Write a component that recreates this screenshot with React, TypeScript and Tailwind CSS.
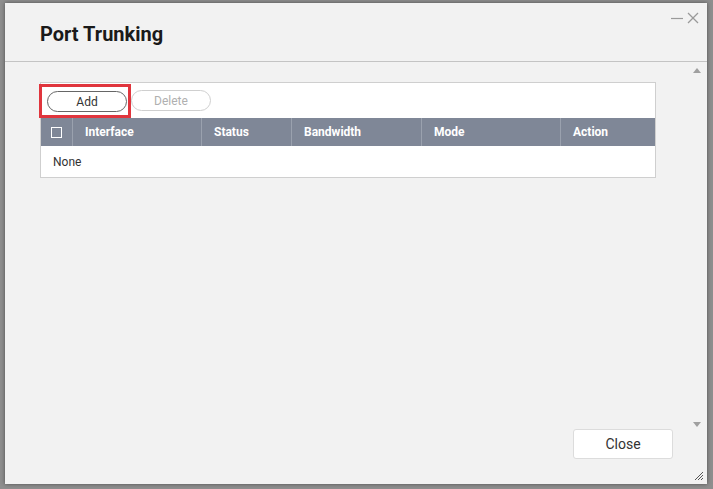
import React from "react";

const font = { fontFamily: "Roboto, 'Noto Sans', Arial, sans-serif" };

export default function App() {
  const cols = [
    { label: "Interface", w: "w-[129px]" },
    { label: "Status", w: "w-[90px]" },
    { label: "Bandwidth", w: "w-[130px]" },
    { label: "Mode", w: "w-[139px]" },
    { label: "Action", w: "flex-1" },
  ];
  return (
    <div
      className="w-[713px] h-[489px] bg-[#8e8e8e] pl-[5px] pt-[3px] pr-[6px] pb-[5px] overflow-hidden"
      style={font}
    >
      <div className="relative w-full h-full bg-[#f2f2f2] flex flex-col shadow-[0_0_4px_rgba(0,0,0,0.45)]">
        {/* header */}
        <div className="relative h-[59px] shrink-0 border-b border-[#c4c4c4] flex items-center pl-[35px] pt-[3px]">
          <span className="text-[20px] font-bold text-[#1a1a1a] leading-none">Port Trunking</span>
          <div className="absolute top-[9px] right-[8px] flex items-center gap-[4px]">
            <svg width="12" height="12" viewBox="0 0 12 12">
              <line x1="0" y1="6.5" x2="12" y2="6.5" stroke="#9a9a9a" strokeWidth="1.2" />
            </svg>
            <svg width="12" height="12" viewBox="0 0 12 12">
              <line x1="1" y1="1" x2="11" y2="11" stroke="#9a9a9a" strokeWidth="1.2" />
              <line x1="11" y1="1" x2="1" y2="11" stroke="#9a9a9a" strokeWidth="1.2" />
            </svg>
          </div>
        </div>

        {/* body */}
        <div className="flex-1 flex min-h-0">
          <div className="flex-1 pl-[35px] pt-[20px]">
            <div className="w-[616px] bg-white border border-[#cfcfcf]">
              <div className="h-[35px] flex items-center pl-[6px] gap-[4px]">
                <div className="relative">
                  <div className="absolute -left-[8px] -top-[5px] w-[92px] h-[34px] border-[3px] border-[#e0353d] pointer-events-none" />
                  <button className="w-[80px] h-[21px] rounded-full border border-[#666] bg-white text-[12px] text-[#333] leading-none">
                    Add
                  </button>
                </div>
                <button className="w-[80px] h-[21px] rounded-full border border-[#cfcfcf] bg-white text-[12px] text-[#b0b0b0] leading-none">
                  Delete
                </button>
              </div>
              <div className="h-[28px] bg-[#7f8797] flex text-white text-[12px] font-bold">
                <div className="w-[32px] border-r border-[#9aa1ae] flex items-center justify-center">
                  <div className="w-[11px] h-[11px] border border-white" />
                </div>
                {cols.map((c, i) => (
                  <div
                    key={c.label}
                    className={`${c.w} ${i < cols.length - 1 ? "border-r border-[#9aa1ae]" : ""} flex items-center pl-[12px]`}
                  >
                    {c.label}
                  </div>
                ))}
              </div>
              <div className="h-[31px] flex items-center pl-[12px] text-[12px] text-[#333]">None</div>
            </div>
          </div>
          <div className="w-[16px] mr-[2px] flex flex-col items-center justify-between pt-[6px] pb-[2px]">
            <svg width="8" height="5" viewBox="0 0 8 5">
              <polygon points="0,5 8,5 4,0" fill="#a0a0a0" />
            </svg>
            <svg width="8" height="5" viewBox="0 0 8 5">
              <polygon points="0,0 8,0 4,5" fill="#a0a0a0" />
            </svg>
          </div>
        </div>

        {/* footer */}
        <div className="h-[55px] shrink-0 flex justify-end items-start pr-[34px]">
          <button className="w-[100px] h-[30px] bg-white border border-[#dcdcdc] rounded-[3px] text-[14px] text-[#333]">
            Close
          </button>
        </div>

        {/* resize grip */}
        <svg className="absolute right-[4px] bottom-[4px]" width="8" height="8" viewBox="0 0 8 8">
          <line x1="8" y1="0" x2="0" y2="8" stroke="#555" strokeWidth="1" />
          <line x1="8" y1="3" x2="3" y2="8" stroke="#555" strokeWidth="1" />
          <line x1="8" y1="6" x2="6" y2="8" stroke="#555" strokeWidth="1" />
        </svg>
      </div>
    </div>
  );
}
